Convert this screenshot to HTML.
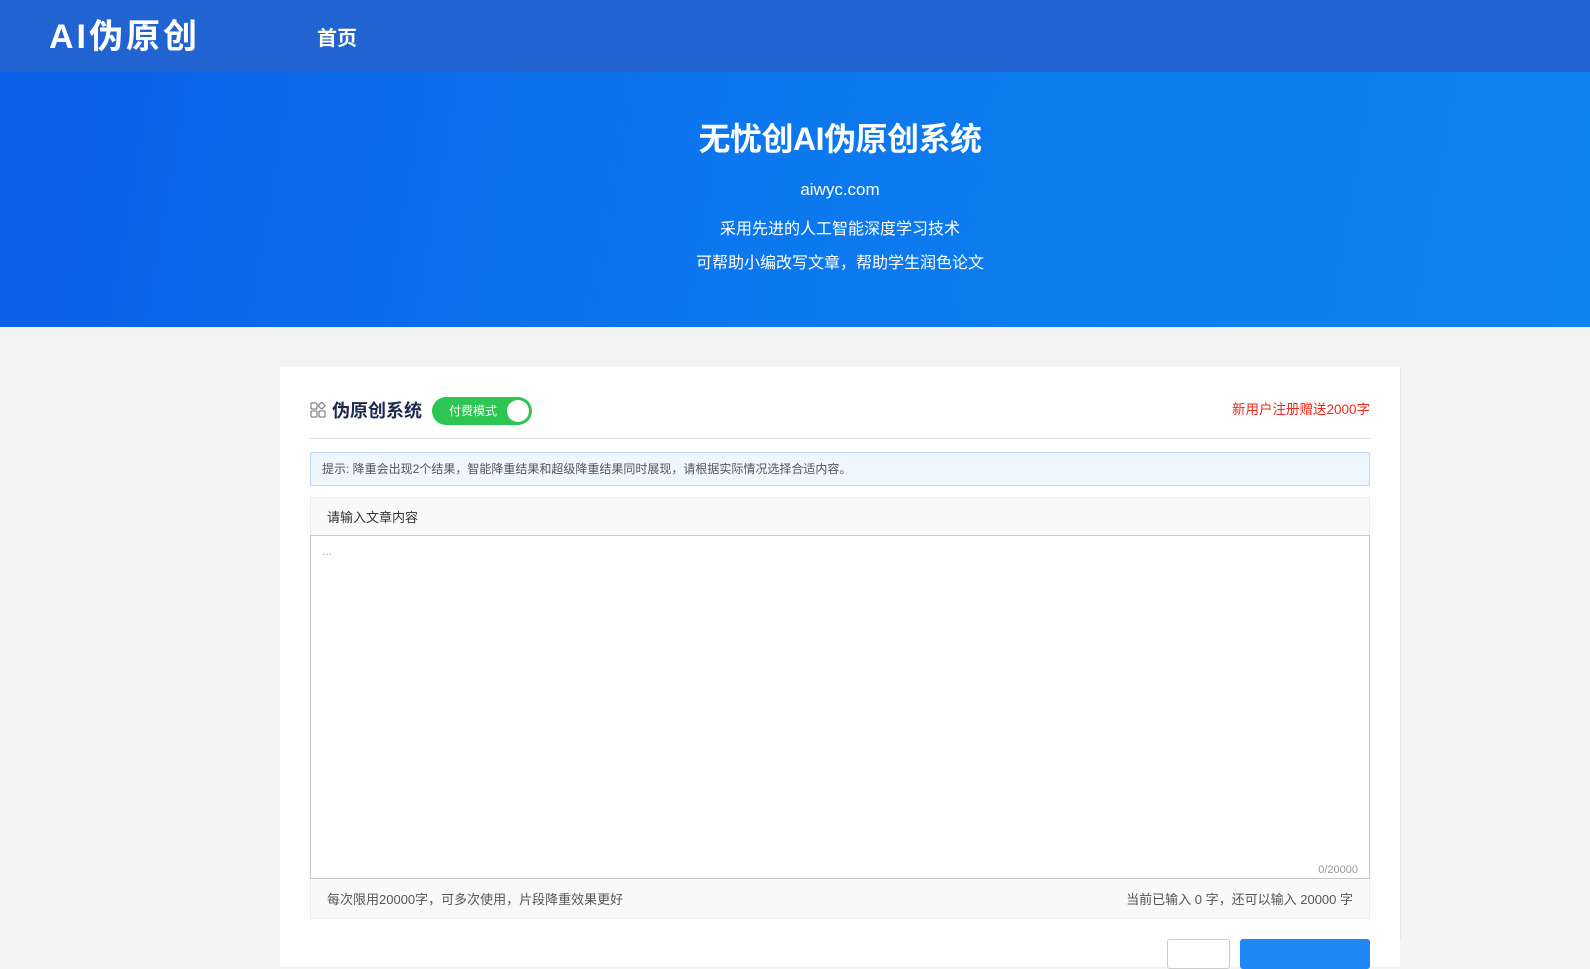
<!DOCTYPE html>
<html><head><meta charset="utf-8"><style>
*{margin:0;padding:0;box-sizing:border-box}
body{width:1590px;height:941px;overflow:hidden;background:#f4f4f4;font-family:"Liberation Sans","Noto Sans CJK SC",sans-serif;position:relative}
.hd{position:absolute;left:0;top:0;width:1590px;height:72px;background:#2163d0;color:#fff}
.logo{position:absolute;left:49px;top:9px;font-size:34px;font-weight:bold;letter-spacing:3px}
.nav{position:absolute;left:317px;top:22px;font-size:20px;font-weight:bold}
.hero{position:absolute;left:0;top:72px;width:1590px;height:255px;background:linear-gradient(100deg,#0a60e8 0%,#0c78ee 50%,#0e84f0 100%);color:#fff;text-align:center;overflow:hidden}
.t1{position:absolute;left:0;width:1680px;top:42px;font-size:32px;font-weight:bold;letter-spacing:-0.5px}
.l{position:absolute;left:0;width:1680px;font-size:16px}
.card{position:absolute;left:280px;top:367px;width:1120px;height:600px;background:#fff}
.ic{position:absolute;left:30px;top:35px}
.tt{position:absolute;left:52px;top:30px;font-size:18px;font-weight:bold;color:#1b2a4e}
.tg{position:absolute;left:152px;top:30px;width:100px;height:28px;border-radius:14px;background:#2dc653;color:#fff;font-size:12px;line-height:28px;padding-left:17px}
.tg i{position:absolute;right:3px;top:3px;width:22px;height:22px;border-radius:50%;background:#fff}
.red{position:absolute;right:30px;top:31px;font-size:13.5px;color:#f0281e}
.dv{position:absolute;left:30px;right:30px;top:71px;border-top:1px solid #dde1e8}
.tip{position:absolute;left:30px;right:30px;top:85px;height:34px;background:#eef6ff;border:1px solid #bcd7f7;border-radius:2px;font-size:12px;color:#555;line-height:32px;padding-left:11px}
.ih{position:absolute;left:30px;right:30px;top:130px;height:39px;background:#f9f9f9;border:1px solid #eee;border-bottom:none;font-size:13px;color:#333;line-height:39px;padding-left:16px}
.ta{position:absolute;left:30px;right:30px;top:168px;height:344px;border:1px solid #c9c9c9;background:#fff}
.ta .p{position:absolute;left:11px;top:8px;color:#aaa;font-size:12px}
.ta .c{position:absolute;right:11px;bottom:2px;color:#999;font-size:11px}
.bb{position:absolute;left:30px;right:30px;top:512px;height:40px;background:#f9f9f9;border:1px solid #eee;border-top:none;font-size:13px;color:#555;line-height:42px;padding:0 16px}
.bb span{float:right}
.b1{position:absolute;left:887px;top:572px;width:63px;height:30px;border:1px solid #ccc;border-radius:3px;background:#fff}
.b2{position:absolute;left:960px;top:572px;width:130px;height:30px;border-radius:3px;background:#1e88f5}
.sh{position:absolute;left:1400px;top:367px;width:1px;height:574px;background:#e6e6e6}
</style></head><body>
<div class="hd"><div class="logo">AI伪原创</div><div class="nav">首页</div></div>
<div class="hero">
<div class="t1">无忧创AI伪原创系统</div>
<div class="l" style="top:108px;font-size:17px">aiwyc.com</div>
<div class="l" style="top:143px">采用先进的人工智能深度学习技术</div>
<div class="l" style="top:177px">可帮助小编改写文章，帮助学生润色论文</div>
</div>
<div class="sh"></div>
<div class="card">
<svg class="ic" width="16" height="16" viewBox="0 0 16 16" fill="none" stroke="#888" stroke-width="1.3"><rect x="1" y="9" width="6" height="6" rx="1"/><rect x="9" y="9" width="6" height="6" rx="1"/><rect x="1" y="1" width="6" height="6" rx="1"/><rect x="9.2" y="1.2" width="5" height="5" rx="1" transform="rotate(45 11.7 3.7)"/></svg>
<div class="tt">伪原创系统</div>
<div class="tg">付费模式<i></i></div>
<div class="red">新用户注册赠送2000字</div>
<div class="dv"></div>
<div class="tip">提示: 降重会出现2个结果，智能降重结果和超级降重结果同时展现，请根据实际情况选择合适内容。</div>
<div class="ih">请输入文章内容</div>
<div class="ta"><div class="p">...</div><div class="c">0/20000</div></div>
<div class="bb">每次限用20000字，可多次使用，片段降重效果更好<span>当前已输入 0 字，还可以输入 20000 字</span></div>
<div class="b1"></div><div class="b2"></div>
</div>
</body></html>
